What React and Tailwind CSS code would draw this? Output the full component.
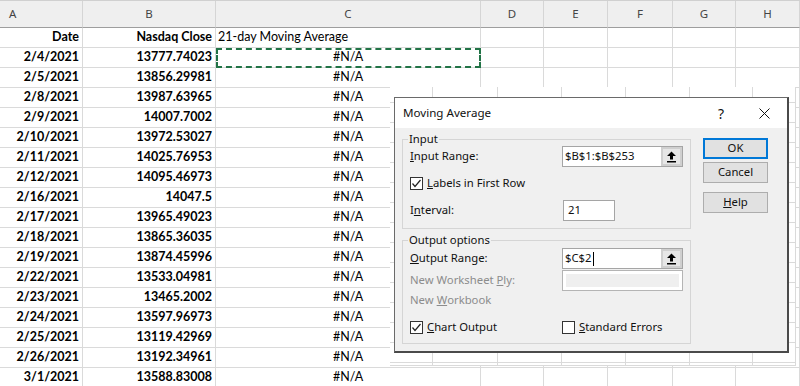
import React from 'react';

const data = [
  ['2/4/2021', '13777.74023'],
  ['2/5/2021', '13856.29981'],
  ['2/8/2021', '13987.63965'],
  ['2/9/2021', '14007.7002'],
  ['2/10/2021', '13972.53027'],
  ['2/11/2021', '14025.76953'],
  ['2/12/2021', '14095.46973'],
  ['2/16/2021', '14047.5'],
  ['2/17/2021', '13965.49023'],
  ['2/18/2021', '13865.36035'],
  ['2/19/2021', '13874.45996'],
  ['2/22/2021', '13533.04981'],
  ['2/23/2021', '13465.2002'],
  ['2/24/2021', '13597.96973'],
  ['2/25/2021', '13119.42969'],
  ['2/26/2021', '13192.34961'],
  ['3/1/2021', '13588.83008'],
];

const letters = ['A', 'B', 'C', 'D', 'E', 'F', 'G', 'H'];

// grid cell borders
const cell = 'border-r border-b border-[#dadada] flex items-center overflow-hidden whitespace-nowrap';

const Checkbox = ({ checked }) => (
  <span className="w-[13px] h-[13px] border border-[#333] bg-white flex items-center justify-center shrink-0">
    {checked && (
      <svg width="11" height="11" viewBox="0 0 11 11">
        <polyline points="1.5,5.5 4,8.5 9.5,2" fill="none" stroke="#222" strokeWidth="1.2" />
      </svg>
    )}
  </span>
);

const UpButton = () => (
  <div className="w-[21px] h-[19px] border-2 border-[#cfcfcf] bg-[#e6e6e6] flex items-center justify-center shrink-0">
    <svg width="11" height="12" viewBox="0 0 11 12">
      <polygon points="5.5,0.5 10,5 7,5 7,8.5 4,8.5 4,5 1,5" fill="#000" />
      <rect x="1" y="10" width="9" height="1.5" fill="#000" />
    </svg>
  </div>
);

const RangeField = ({ children }) => (
  <div className="w-[121px] h-[21px] border border-[#a5a5a5] bg-white flex items-center justify-between">
    <span className="pl-[2px] flex items-center">{children}</span>
    <UpButton />
  </div>
);

const DialogButton = ({ children, focused }) => (
  <div
    className={`w-[65px] h-[21px] bg-[#e1e1e1] flex items-center justify-center ${
      focused ? 'border-2 border-[#0078d7]' : 'border border-[#adadad]'
    }`}
  >
    {children}
  </div>
);

const Patch = () => {
  const cols = 7;
  const rowsCount = 15;
  return (
    <div className="absolute left-[390px] top-[87px] w-[406px] h-[279px] bg-white grid grid-cols-[43px_65px_64px_64px_64px_63px_43px] grid-rows-[16px_repeat(13,20px)_3px]">
      {Array.from({ length: cols * rowsCount }).map((_, i) => (
        <div key={i} className="border-r border-b border-[#dadada]" />
      ))}
    </div>
  );
};

const MovingAverageDialog = () => (
  <div className="absolute left-[394px] top-[97px] w-[395px] h-[256px] bg-[#f0f0f0] border border-[#6a6a6a] border-r-2 border-b-2 border-r-[#4a4a4a] border-b-[#4a4a4a] flex flex-col font-['Noto_Sans',sans-serif] text-[11.3px] text-[#111]">
    <div className="h-[30px] bg-white flex items-center pl-[8px] shrink-0">
      <span className="flex-1 text-[11.6px]">Moving Average</span>
      <span className="text-[14px] w-[20px] text-center mr-[28px]">?</span>
      <svg width="11" height="11" viewBox="0 0 11 11" className="mr-[17px]">
        <path d="M0.5 0.5L10.5 10.5M10.5 0.5L0.5 10.5" stroke="#111" strokeWidth="1" />
      </svg>
    </div>

    <div className="flex pl-[7px]">
      <div className="w-[289px]">
        {/* Input */}
        <div className="relative border border-[#d5d5d5] mt-[11px] pt-[6px] pb-[7px] pl-[7px]">
          <span className="absolute -top-[9px] left-[5px] px-[1px] bg-[#f0f0f0] leading-[16px]">Input</span>
          <div className="flex items-center h-[21px]">
            <span className="w-[152px]"><span className="underline">I</span>nput Range:</span>
            <RangeField>$B$1:$B$253</RangeField>
          </div>
          <div className="flex items-center h-[21px] mt-[6px] gap-[4px]">
            <Checkbox checked />
            <span><span className="underline">L</span>abels in First Row</span>
          </div>
          <div className="flex items-center h-[21px] mt-[6px]">
            <span className="w-[153px]">I<span className="underline">n</span>terval:</span>
            <div className="w-[52px] h-[21px] border border-[#a5a5a5] bg-white flex items-center pl-[4px]">21</div>
          </div>
        </div>

        {/* Output options */}
        <div className="relative border border-[#d5d5d5] mt-[11px] pt-[7px] pb-[5px] pl-[7px]">
          <span className="absolute -top-[9px] left-[5px] px-[1px] bg-[#f0f0f0] leading-[16px]">Output options</span>
          <div className="flex items-center h-[21px]">
            <span className="w-[152px]"><span className="underline">O</span>utput Range:</span>
            <RangeField>
              $C$2<span className="inline-block w-px h-[14px] bg-black ml-px" />
            </RangeField>
          </div>
          <div className="flex items-center h-[21px] mt-[1px] text-[#8c8c8c]">
            <span className="w-[152px]">New Worksheet <span className="underline">P</span>ly:</span>
            <div className="w-[121px] h-[21px] border border-[#b4b4b4] bg-white p-[3px]">
              <div className="w-full h-full bg-[#efefef]" />
            </div>
          </div>
          <div className="flex items-center h-[18px] text-[#8c8c8c]">
            New <span className="underline ml-[3px]">W</span>orkbook
          </div>
          <div className="flex items-center h-[21px] mt-[8px]">
            <div className="w-[152px] flex items-center gap-[4px]">
              <Checkbox checked />
              <span><span className="underline">C</span>hart Output</span>
            </div>
            <div className="flex items-center gap-[4px]">
              <Checkbox />
              <span><span className="underline">S</span>tandard Errors</span>
            </div>
          </div>
        </div>
      </div>

      <div className="ml-[12px] mt-[10px] flex flex-col">
        <DialogButton focused>OK</DialogButton>
        <div className="mt-[3px]">
          <DialogButton>Cancel</DialogButton>
        </div>
        <div className="mt-[9px]">
          <DialogButton>
            <span><span className="underline">H</span>elp</span>
          </DialogButton>
        </div>
      </div>
    </div>
  </div>
);

export default function App() {
  return (
    <div className="relative w-[800px] h-[386px] overflow-hidden bg-white">
      <div className="grid grid-cols-[83px_133px_265px_63px_64px_65px_63px_64px] border-t border-[#d0d0d0] font-['Lato',sans-serif] text-[12.5px] text-black">
        {letters.map((l, i) => (
          <div
            key={l}
            className={`h-[27px] bg-[#efefef] border-r border-r-[#d5d5d5] border-b border-b-[#9e9e9e] flex items-center font-['Noto_Sans',sans-serif] text-[11.5px] text-[#444] ${
              i === 0 ? 'pl-[9px]' : 'justify-center'
            }`}
          >
            {l}
          </div>
        ))}

        {/* label row */}
        <div className={`${cell} h-[20px] justify-end pr-[3px] font-bold`}>Date</div>
        <div className={`${cell} h-[20px] justify-end pr-[3px] font-bold`}>Nasdaq Close</div>
        <div className={`${cell} h-[20px] pl-[2px]`}>21-day Moving Average</div>
        {[0, 1, 2, 3, 4].map((k) => (
          <div key={k} className={`${cell} h-[20px]`} />
        ))}

        {data.map(([d, v], r) => (
          <React.Fragment key={d}>
            <div className={`${cell} h-[20px] justify-end pr-[3px] font-bold`}>{d}</div>
            <div className={`${cell} h-[20px] justify-end pr-[3px] font-bold`}>{v}</div>
            <div className={`${cell} h-[20px] justify-center relative overflow-visible`}>
              #N/A
              {r === 0 && (
                <div className="absolute left-0 top-0 right-[-1px] bottom-[-1px] border-2 border-dashed border-[#217346]" />
              )}
            </div>
            {[0, 1, 2, 3, 4].map((k) => (
              <div key={k} className={`${cell} h-[20px]`} />
            ))}
          </React.Fragment>
        ))}
      </div>

      <Patch />
      <MovingAverageDialog />
    </div>
  );
}
